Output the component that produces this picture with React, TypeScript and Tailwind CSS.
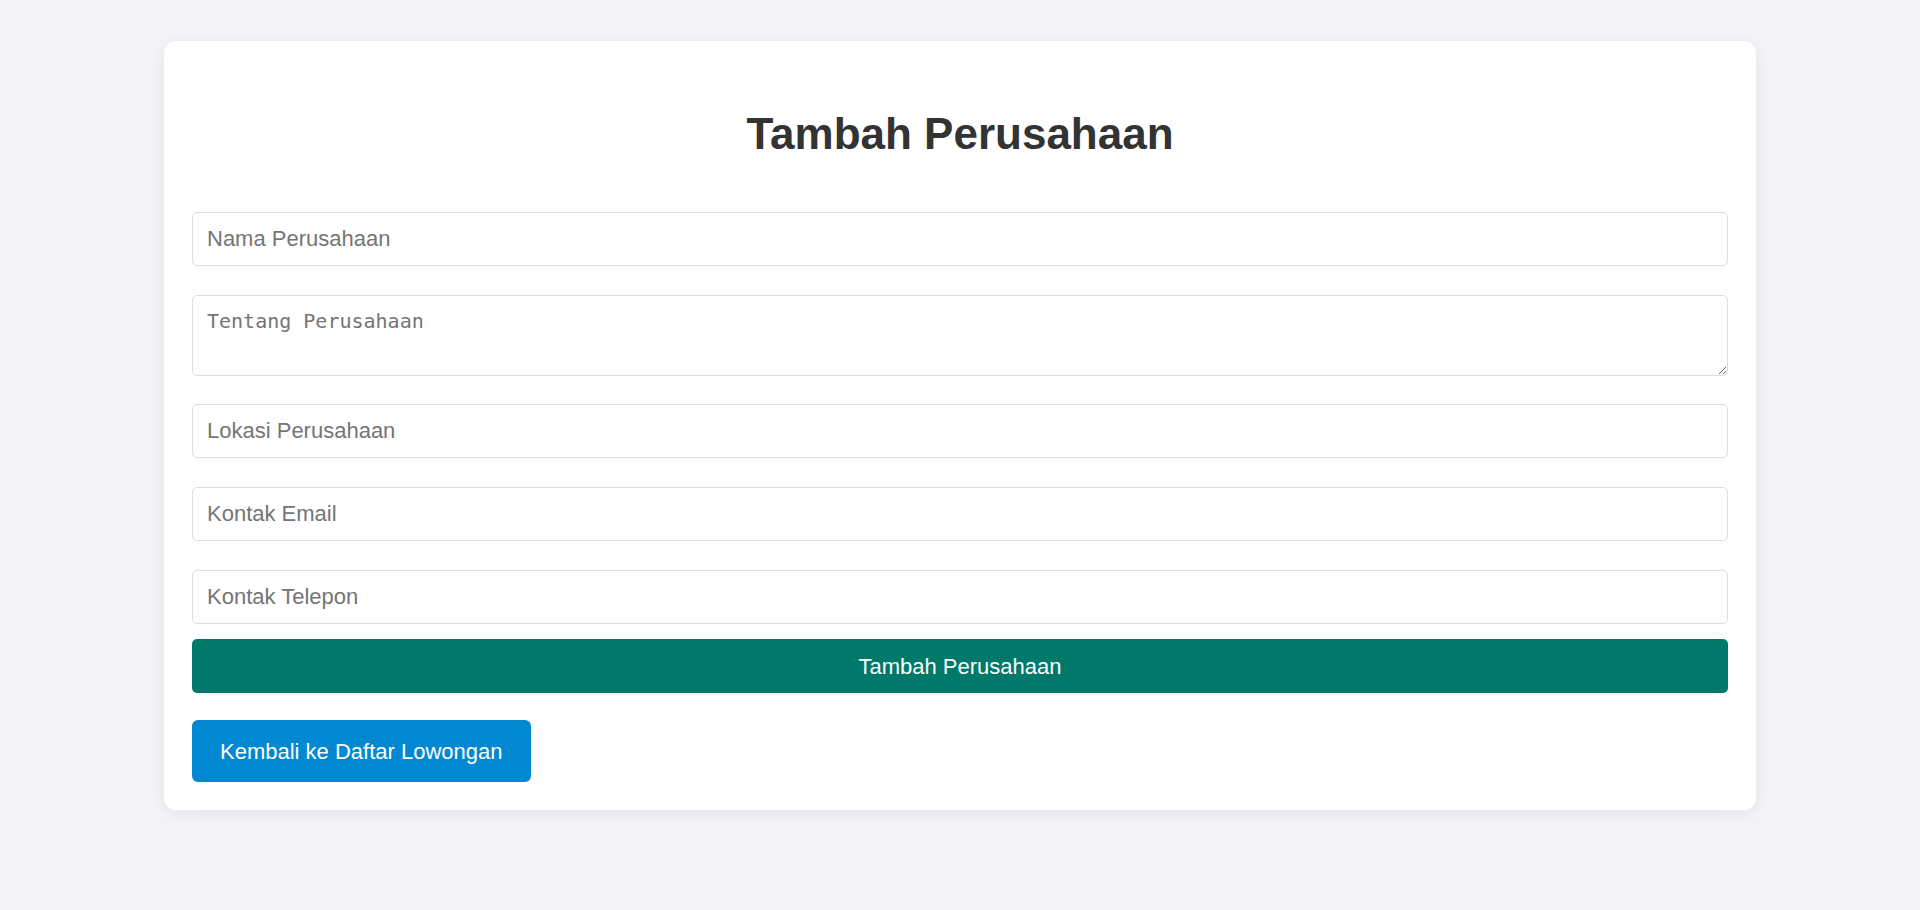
import { useState } from 'react';

export default function App() {
  const [form, setForm] = useState({
    nama: '',
    tentang: '',
    lokasi: '',
    email: '',
    telepon: '',
  });

  const update = (key: keyof typeof form) => (e: { target: { value: string } }) =>
    setForm({ ...form, [key]: e.target.value });

  const inputClass =
    'block h-[54px] w-full rounded-[5px] border border-[#dddddd] bg-white px-[14px] text-[22px] text-[#333333] outline-none placeholder:text-[#757575]';

  return (
    <main
      className="min-h-[910px] bg-[#f4f4f9] pt-[41px]"
      style={{ fontFamily: '"Liberation Sans", Arial, sans-serif' }}
    >
      <div className="mx-auto w-[1592px] rounded-[12px] bg-white px-[28px] pb-[28px] pt-[28px] shadow-[0_4px_20px_rgba(0,0,0,0.08)]">
        {/* judul */}
        <h1 className="mb-[53px] mt-[39px] text-center text-[44px] font-bold leading-[51px] text-[#333333]">
          Tambah Perusahaan
        </h1>

        {/* form */}
        <form onSubmit={(e) => e.preventDefault()} className="flex flex-col">
          <input
            value={form.nama}
            onChange={update('nama')}
            placeholder="Nama Perusahaan"
            className={`${inputClass} mb-[29px]`}
          />
          <textarea
            value={form.tentang}
            onChange={update('tentang')}
            placeholder="Tentang Perusahaan"
            className="mb-[28px] block h-[81px] w-full rounded-[5px] border border-[#dddddd] bg-white p-[14px] text-[20px] leading-[23px] text-[#333333] outline-none placeholder:text-[#757575]"
            style={{ fontFamily: '"DejaVu Sans Mono", monospace' }}
          />
          <input
            value={form.lokasi}
            onChange={update('lokasi')}
            placeholder="Lokasi Perusahaan"
            className={`${inputClass} mb-[29px]`}
          />
          <input
            value={form.email}
            onChange={update('email')}
            placeholder="Kontak Email"
            className={`${inputClass} mb-[29px]`}
          />
          <input
            value={form.telepon}
            onChange={update('telepon')}
            placeholder="Kontak Telepon"
            className={`${inputClass} mb-[15px]`}
          />
          <button
            type="submit"
            className="h-[54px] w-full rounded-[5px] bg-[#00796b] text-[22px] text-white"
          >
            Tambah Perusahaan
          </button>
        </form>

        {/* kembali */}
        <button
          type="button"
          className="mt-[27px] h-[62px] rounded-[6px] bg-[#0288d1] px-[28px] text-[22px] text-white"
        >
          Kembali ke Daftar Lowongan
        </button>
      </div>
    </main>
  );
}
